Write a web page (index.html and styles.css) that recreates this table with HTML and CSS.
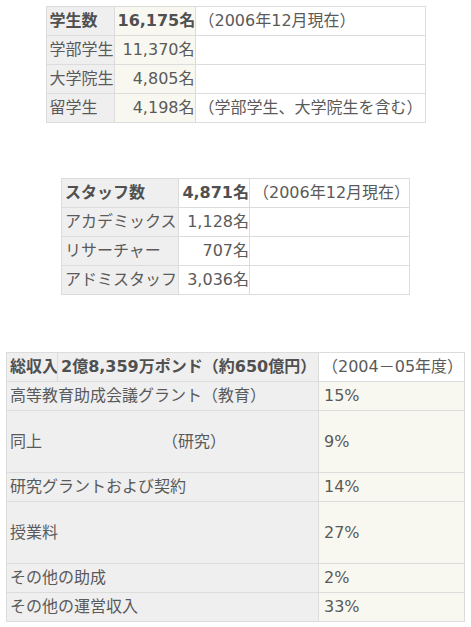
FILE: index.html
```html
<!DOCTYPE html>
<html lang="ja">
<head>
<meta charset="utf-8">
<link rel="stylesheet" href="styles.css">
</head>
<body>
<table class="tbl t1">
  <colgroup><col class="c1"><col class="c2"><col class="c3"></colgroup>
  <tr><th class="lab">学生数</th><th class="num cream">16,175名</th><td>（2006年12月現在）</td></tr>
  <tr><td class="lab">学部学生</td><td class="num cream">11,370名</td><td></td></tr>
  <tr><td class="lab">大学院生</td><td class="num cream">4,805名</td><td></td></tr>
  <tr><td class="lab">留学生</td><td class="num cream">4,198名</td><td>（学部学生、大学院生を含む）</td></tr>
</table>

<table class="tbl t2">
  <colgroup><col class="c1"><col class="c2"><col class="c3"></colgroup>
  <tr><th class="lab">スタッフ数</th><th class="num">4,871名</th><td>（2006年12月現在）</td></tr>
  <tr><td class="lab">アカデミックス</td><td class="num">1,128名</td><td></td></tr>
  <tr><td class="lab">リサーチャー</td><td class="num">707名</td><td></td></tr>
  <tr><td class="lab">アドミスタッフ</td><td class="num">3,036名</td><td></td></tr>
</table>

<table class="tbl t3">
  <colgroup><col class="c1"><col class="c2"><col class="c3"></colgroup>
  <tr><th class="lab">総収入</th><th class="lab">2億8,359万ポンド（約650億円）</th><td>（2004－05年度）</td></tr>
  <tr><td class="lab" colspan="2">高等教育助成会議グラント（教育）</td><td class="cream">15%</td></tr>
  <tr class="tall"><td class="lab" colspan="2">同上　　　　　　　　（研究）</td><td class="cream">9%</td></tr>
  <tr><td class="lab" colspan="2">研究グラントおよび契約</td><td class="cream">14%</td></tr>
  <tr class="tall"><td class="lab" colspan="2">授業料</td><td class="cream">27%</td></tr>
  <tr><td class="lab" colspan="2">その他の助成</td><td class="cream">2%</td></tr>
  <tr><td class="lab" colspan="2">その他の運営収入</td><td class="cream">33%</td></tr>
</table>
</body>
</html>
```

FILE: styles.css
```css
html, body {
  margin: 0;
  padding: 0;
  background: #ffffff;
}
body {
  padding-top: 6px;
  font-family: "DejaVu Sans", "Noto Sans CJK JP", sans-serif;
  font-size: 16px;
  color: #5a5a5a;
}
.tbl {
  border-collapse: collapse;
  table-layout: fixed;
  margin: 0 auto;
}
.tbl th,
.tbl td {
  border: 1px solid #dcdcdc;
  padding: 3px 2px 3px 3px;
  line-height: 22px;
  height: 22px;
  white-space: nowrap;
  text-align: left;
  vertical-align: middle;
  background: #ffffff;
  overflow: hidden;
}
.tbl th {
  font-weight: bold;
  color: #505050;
}
.tbl .lab {
  background: #efefef;
}
.tbl .cream {
  background: #f9f8f0;
}
.tbl .num {
  text-align: right;
  padding-right: 0;
}
.t1 { width: 379px; margin-bottom: 55px; }
.t1 .c1 { width: 68px; }
.t1 .c2 { width: 81px; }
.t1 .c3 { width: 230px; }

.t2 { width: 348px; margin-bottom: 57px; }
.t2 .c1 { width: 117px; }
.t2 .c2 { width: 71px; }
.t2 .c3 { width: 160px; }

.t3 { width: 458px; }
.t3 .c1 { width: 51px; }
.t3 .c2 { width: 261px; }
.t3 .c3 { width: 146px; }
.t3 td.cream { padding-left: 5px; }
.t3 tr.tall td { height: 55px; }
```
